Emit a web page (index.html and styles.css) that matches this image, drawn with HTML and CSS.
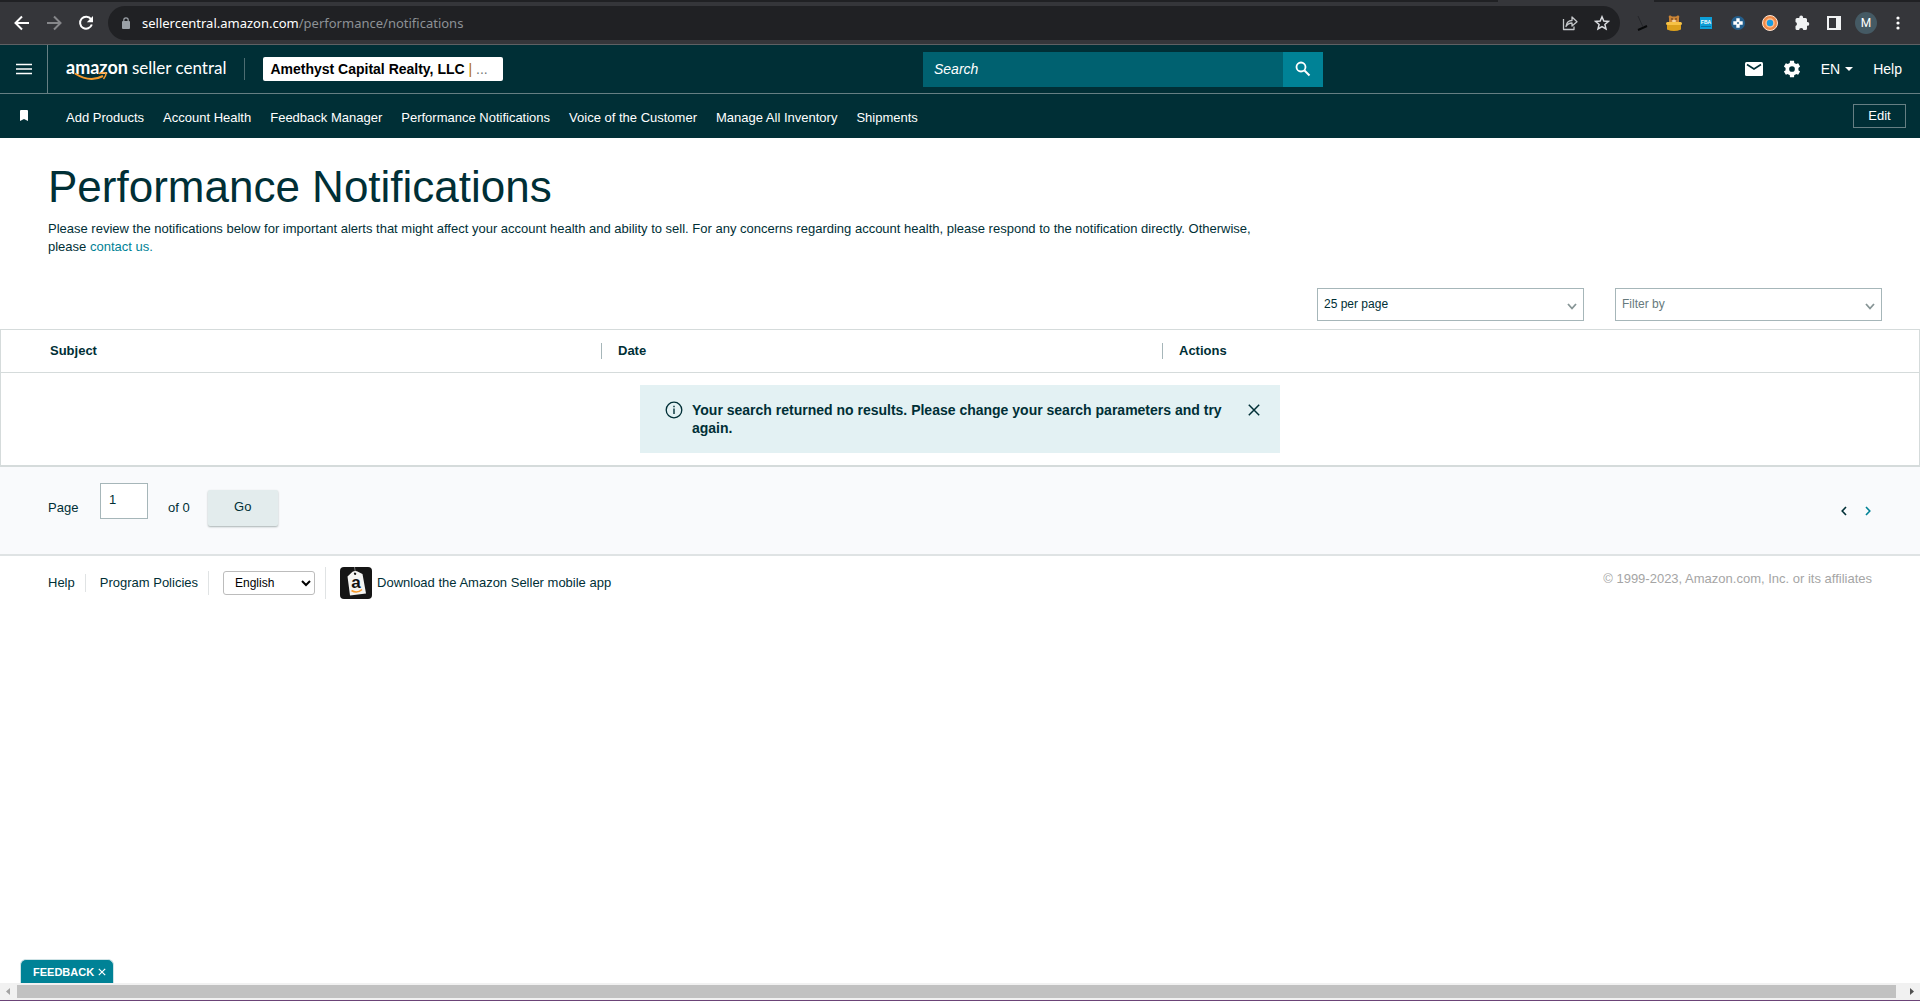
FILE: index.html
```html
<!DOCTYPE html>
<html lang="en">
<head>
<meta charset="utf-8">
<title>Performance Notifications</title>
<link rel="stylesheet" href="styles.css">
</head>
<body>
<div class="browser">
  <div class="tabstrip"><span class="strip-left"></span><span class="strip-right"></span></div>
  <div class="toolbar">
    <button class="tool" aria-label="Back"><svg width="16" height="16" viewBox="0 0 16 16"><path d="M15 8H2M8 1.500L1.500 8L8 14.500" fill="none" stroke="#fff" stroke-width="2"/></svg></button>
    <button class="tool" aria-label="Forward"><svg width="16" height="16" viewBox="0 0 16 16"><path d="M1 8H14M8 1.500L14.500 8L8 14.500" fill="none" stroke="#86878a" stroke-width="2"/></svg></button>
    <button class="tool" aria-label="Reload"><svg width="16" height="16" viewBox="0 0 16 16"><path d="M13 4.200A6 6 0 1 0 13.800 9.500" fill="none" stroke="#fff" stroke-width="2"/><path d="M15 1V7.200H8.800Z" fill="#fff"/></svg></button>
    <div class="omnibox">
      <svg width="8" height="12" viewBox="0 0 8 12"><rect y="4" width="8" height="8" rx="1" fill="#9aa0a6"/><path d="M1.800 4.500V3a2.200 2.200 0 0 1 4.400 0v1.500" fill="none" stroke="#9aa0a6" stroke-width="1.200"/></svg>
      <span class="url">sellercentral.amazon.com<span class="path">/performance/notifications</span></span>
      <button class="tool" aria-label="Share"><svg width="16" height="16" viewBox="0 0 16 16"><path d="M1.500 4V14.500H12V11.500M4 11.500C4.500 7.500 7 5.500 10 5.500V2L15 6.700L10 11V8C7.500 8 5.500 9 4 11.500Z" fill="none" stroke="#c4c7ca" stroke-width="1.300" stroke-linejoin="round"/></svg></button>
      <button class="tool" aria-label="Bookmark"><svg width="16" height="16" viewBox="0 0 16 16"><path d="M8 1.800L9.800 6L14.400 6.400L10.900 9.400L12 13.900L8 11.500L4 13.900L5.100 9.400L1.600 6.400L6.200 6Z" fill="none" stroke="#dadce0" stroke-width="1.500"/></svg></button>
    </div>
    <button class="tool" aria-label="Extension"><svg width="16" height="16" viewBox="0 0 16 16"><path d="M4 15L13 11" stroke="#08090a" stroke-width="2"/><path d="M4 1L9 12" stroke="#25262a" stroke-width="1"/></svg></button>
    <button class="tool" aria-label="Bear extension"><svg width="16" height="16" viewBox="0 0 16 16"><path d="M3 9V3Q2 0 4.500 .5L6 1.500H10L11.500 .5Q14 0 13 3V9Z" fill="#c98436"/><circle cx="6" cy="4" r=".8" fill="#452718"/><circle cx="10" cy="4" r=".8" fill="#452718"/><ellipse cx="8" cy="6" rx="2" ry="1.300" fill="#f4d3a0"/><rect y="7" width="16" height="3" rx="1.500" fill="#f7c245"/><path d="M1 10H15V14.500Q8 17.500 1 14.500Z" fill="#dda11c"/></svg></button>
    <button class="tool" aria-label="FBA extension"><svg width="12" height="12" viewBox="0 0 12 12"><rect width="12" height="12" fill="#0d9fd8"/><text x="6" y="7" text-anchor="middle" class="fba">FBA</text><path d="M1 9.500H11" stroke="#0873a8"/></svg></button>
    <button class="tool" aria-label="Search extension"><svg width="14" height="14" viewBox="0 0 14 14"><circle cx="7" cy="7" r="7" fill="#245f8c"/><path d="M5.300 2.300h3.400v3h3v3.400h-3v3H5.300v-3h-3V5.300h3Z" fill="#fff"/><path d="M7 5.700L8.300 7L7 8.300L5.700 7Z" fill="#245f8c"/></svg></button>
    <button class="tool" aria-label="Ring extension"><svg width="16" height="16" viewBox="0 0 16 16"><circle cx="8" cy="8" r="7.500" fill="#f18a46" stroke="#fde4d2"/><circle cx="8" cy="8" r="4.700" fill="#fbbd91"/><circle cx="8" cy="8" r="3.200" fill="#179de3"/></svg></button>
    <button class="tool" aria-label="Extensions"><svg width="16" height="16" viewBox="0 0 16 16"><path d="M1.500 4.500Q1.500 3 3 3H5.300V2.500a1.900 1.900 0 0 1 3.800 0V3h2.400Q13 3 13 4.500V7h.4a1.900 1.900 0 0 1 0 3.800H13v2.700Q13 15 11.500 15H9.300a2.100 2.100 0 0 0-4.200 0H3Q1.500 15 1.500 13.500V11a2.100 2.100 0 0 0 0-4Z" fill="#f1f3f4"/></svg></button>
    <button class="tool" aria-label="Side panel"><svg width="14" height="14" viewBox="0 0 14 14"><rect width="14" height="14" fill="#f1f3f4"/><rect x="2" y="2" width="7" height="10" fill="#35363a"/></svg></button>
    <button class="tool" aria-label="Profile"><span class="avatar">M</span></button>
    <button class="tool" aria-label="Menu"><svg width="4" height="14" viewBox="0 0 4 14" fill="#fff"><circle cx="2" cy="2" r="1.600"/><circle cx="2" cy="7" r="1.600"/><circle cx="2" cy="12" r="1.600"/></svg></button>
  </div>
</div>

<header class="header">
  <div class="brandbar">
    <button class="burger" aria-label="Menu"><svg width="16" height="12" viewBox="0 0 16 12"><path d="M0 1.500H16M0 6H16M0 10.500H16" stroke="#fff" stroke-width="1.500"/></svg></button>
    <a class="logo" href="#"><span class="words"><b>amazon</b><span>seller central</span></span>
      <svg class="smile" width="34" height="10" viewBox="0 0 34 10"><path d="M1 1.500Q16 11 29 4" fill="none" stroke="#f79a2c" stroke-width="2"/><path d="M25 1.500Q32 0 32 1.500Q32 4 29.500 7" fill="none" stroke="#f79a2c" stroke-width="1.500"/></svg>
    </a>
    <button class="account"><b>Amethyst Capital Realty, LLC</b> <i>|</i> <span>...</span></button>
  </div>
  <form class="search">
    <input type="text" placeholder="Search" aria-label="Search">
    <button type="button" aria-label="Search"><svg width="16" height="16" viewBox="0 0 16 16"><circle cx="6" cy="6" r="4.500" fill="none" stroke="#fff" stroke-width="1.800"/><path d="M9.500 9.500L14.500 14.500" stroke="#fff" stroke-width="2"/></svg></button>
  </form>
  <div class="utils">
    <a href="#" aria-label="Messages"><svg width="18" height="14" viewBox="0 0 18 14"><rect width="18" height="14" rx="1.500" fill="#fff"/><path d="M2 2.500L9 7L16 2.500" fill="none" stroke="#002f36" stroke-width="1.600"/></svg></a>
    <a href="#" aria-label="Settings"><svg width="18" height="18" viewBox="0 0 24 24"><path fill="#fff" d="M20.500 13.500a8 8 0 0 0 0-3l2.300-1.700-2.600-4.600-2.700 1.200a8 8 0 0 0-2.500-1.500L14.700 1H9.300L9 3.900a8 8 0 0 0-2.500 1.500L3.800 4.200 1.200 8.800l2.300 1.700a8 8 0 0 0 0 3l-2.300 1.700 2.600 4.600 2.700-1.200A8 8 0 0 0 9 20.100l.3 2.900h5.400l.3-2.900a8 8 0 0 0 2.500-1.500l2.700 1.200 2.600-4.600ZM12 15.800a3.800 3.800 0 1 1 0-7.600 3.800 3.800 0 0 1 0 7.600Z"/></svg></a>
    <button class="lang">EN <svg width="8" height="4" viewBox="0 0 8 4"><path d="M0 0H8L4 4Z" fill="#fff"/></svg></button>
    <a href="#">Help</a>
  </div>
</header>

<nav class="nav">
  <span class="mark"><svg width="8" height="12" viewBox="0 0 8 12"><path d="M0 1Q0 0 1 0H7Q8 0 8 1V11L4 9L0 11Z" fill="#fff"/></svg></span>
  <a href="#">Add Products</a><a href="#">Account Health</a><a href="#">Feedback Manager</a><a href="#">Performance Notifications</a><a href="#">Voice of the Customer</a><a href="#">Manage All Inventory</a><a href="#">Shipments</a>
  <button class="edit">Edit</button>
</nav>

<main class="main">
  <section class="intro">
    <h1>Performance Notifications</h1>
    <p>Please review the notifications below for important alerts that might affect your account health and ability to sell. For any concerns regarding account health, please respond to the notification directly. Otherwise, please <a href="#">contact us.</a></p>
  </section>
  <div class="filters">
    <div class="picker"><select aria-label="Results per page"><option>25 per page</option></select><svg width="10" height="7" viewBox="0 0 10 7"><path d="M1 1L5 5.500L9 1" fill="none" stroke="#879596" stroke-width="1.800"/></svg></div>
    <div class="picker muted"><select aria-label="Filter by"><option>Filter by</option></select><svg width="10" height="7" viewBox="0 0 10 7"><path d="M1 1L5 5.500L9 1" fill="none" stroke="#879596" stroke-width="1.800"/></svg></div>
  </div>
  <table class="results">
    <colgroup><col class="col-subject"><col class="col-date"><col></colgroup>
    <thead><tr><th><span>Subject</span></th><th><span>Date</span></th><th><span>Actions</span></th></tr></thead>
    <tbody><tr><td colspan="3">
      <div class="alert">
        <svg width="18" height="18" viewBox="0 0 18 18"><circle cx="9" cy="9" r="7.800" fill="none" stroke="#002f36" stroke-width="1.300"/><path d="M9 7.500V13M9 4.800V6.200" stroke="#002f36" stroke-width="1.400"/></svg>
        <p>Your search returned no results. Please change your search parameters and try again.</p>
        <button aria-label="Close"><svg width="12" height="12" viewBox="0 0 12 12"><path d="M.8 .8L11.200 11.200M11.200 .8L.8 11.200" stroke="#002f36" stroke-width="1.500"/></svg></button>
      </div>
    </td></tr></tbody>
  </table>
  <div class="pager">
    <label for="page">Page</label>
    <input id="page" type="text" value="1">
    <span class="total">of 0</span>
    <button class="go">Go</button>
    <div class="arrows">
      <button aria-label="Previous page"><svg width="6" height="10" viewBox="0 0 6 10"><path d="M5 1L1.200 5L5 9" fill="none" stroke="#002f36" stroke-width="1.600"/></svg></button>
      <button aria-label="Next page"><svg width="6" height="10" viewBox="0 0 6 10"><path d="M1 1L4.800 5L1 9" fill="none" stroke="#008296" stroke-width="1.600"/></svg></button>
    </div>
  </div>
  <footer class="footer">
    <ul>
      <li><a href="#">Help</a></li>
      <li><a href="#">Program Policies</a></li>
      <li><select aria-label="Language"><option>English</option></select></li>
      <li><a class="app" href="#"><svg width="32" height="32" viewBox="0 0 32 32"><rect width="32" height="32" rx="4" fill="#151515"/><path d="M14.500 0L15.500 6" stroke="#777"/><path fill-rule="evenodd" d="M7.500 9.500L12.500 4.800Q14.500 3.500 17 4.200L22.500 7L26 26.500L10 28.500ZM15 5.500a1.200 1.200 0 1 0 .1 2.400a1.200 1.200 0 0 0-.1-2.400Z" fill="#f4f4f2"/><text x="16" y="21" text-anchor="middle" class="tag">a</text><path d="M11.500 23.500Q17 27 22 22.500" fill="none" stroke="#f79a2c" stroke-width="1.600"/></svg><span>Download the Amazon Seller mobile app</span></a></li>
    </ul>
    <small>© 1999-2023, Amazon.com, Inc. or its affiliates</small>
  </footer>
</main>

<button class="feedback">FEEDBACK <svg width="8" height="8" viewBox="0 0 8 8"><path d="M.8 .8L7.200 7.200M7.200 .8L.8 7.200" stroke="#fff" stroke-width="1.200"/></svg></button>
<div class="scrollbar">
  <svg width="17" height="17" viewBox="0 0 17 17"><path d="M10 5V12L6 8.500Z" fill="#a3a3a3"/></svg>
  <span class="thumb"></span>
  <svg width="24" height="17" viewBox="0 0 24 17"><path d="M14 5V12L18 8.500Z" fill="#505050"/></svg>
</div>
</body>
</html>
```
FILE: styles.css
```css
* { box-sizing: border-box; }
body {
  margin: 0;
  min-height: 100vh;
  display: flex;
  flex-direction: column;
  background: #fff;
  color: #002f36;
  font: 13px/18px "Liberation Sans", Arial, sans-serif;
}
button, input, select { font: inherit; color: inherit; margin: 0; }
button { background: none; border: 0; padding: 0; }
a { color: inherit; text-decoration: none; }
svg { display: block; flex: none; }

.browser { background: #35363a; border-bottom: 1px solid #5f6063; }
.tabstrip { display: flex; height: 2px; }
.strip-left { flex: 1; margin-right: 156px; background: #202124; }
.strip-right { width: 266px; background: #202124; }
.toolbar { display: flex; align-items: center; padding: 4px 6px; }
.tool { width: 32px; height: 32px; display: flex; align-items: center; justify-content: center; flex: none; }
.omnibox {
  flex: 1;
  height: 34px;
  margin: 0 6px;
  padding: 0 2px 0 14px;
  border-radius: 17px;
  background: #202124;
  display: flex;
  align-items: center;
}
.url { flex: 1; margin-left: 12px; color: #fff; font: 13px/20px "Noto Sans", sans-serif; }
.path { color: #8d9196; }
.avatar { width: 22px; height: 22px; border-radius: 50%; background: #455a64; color: #fff; font: 12px/22px Roboto, sans-serif; text-align: center; }
.fba { font: bold 5px "Liberation Sans", sans-serif; fill: #fff; }

.header {
  display: grid;
  grid-template-columns: 923fr 400px 597fr;
  align-items: center;
  height: 49px;
  background: #002f36;
  border-bottom: 1px solid #667f83;
  color: #fff;
}
.brandbar { display: flex; align-items: center; height: 48px; }
.burger { width: 48px; height: 48px; border-right: 1px solid #667f83; display: flex; align-items: center; justify-content: center; }
.logo { position: relative; margin-left: 18px; padding-right: 18px; border-right: 1px solid #4d6d72; }
.words { display: flex; align-items: baseline; gap: 4px; padding-bottom: 3px; font: 18px/18px Lato, sans-serif; }
.words span { font-size: 17px; }
.smile { position: absolute; left: 8px; top: 14px; }
.account {
  width: 240px;
  height: 24px;
  margin-left: 18px;
  padding: 0 7px;
  border-radius: 2px;
  background: #fff;
  color: #000;
  font-size: 14px;
  text-align: left;
}
.account i { color: #b06a00; font-style: normal; }
.account span { color: #777; }
.search { display: flex; height: 35px; }
.search input {
  flex: 1;
  min-width: 0;
  border: 0;
  padding: 0 11px;
  background: #006170;
  color: #fff;
  font-size: 14px;
  font-style: italic;
}
.search input::placeholder { color: #fff; opacity: 1; }
.search button { width: 40px; background: #008296; display: flex; align-items: center; justify-content: center; }
.utils { display: flex; justify-content: flex-end; align-items: center; gap: 20px; padding-right: 18px; font-size: 14px; }
.lang { display: flex; align-items: center; gap: 5px; }

.nav { display: flex; align-items: center; gap: 19px; height: 44px; padding-right: 14px; background: #002f36; color: #fff; }
.nav a { padding-top: 3px; }
.mark { width: 47px; display: flex; justify-content: center; }
.edit { width: 53px; height: 24px; margin-left: auto; border: 1px solid #667f83; line-height: 20px; }

.main { flex: 1; }
.intro { padding: 24px 48px 0; }
h1 { margin: 0 0 8px; font-size: 44px; line-height: 50px; font-weight: 400; }
.intro p { margin: 0; max-width: 1220px; }
.intro a { color: #008296; }
.filters { display: flex; justify-content: flex-end; gap: 31px; padding: 32px 38px 8px; }
.picker { position: relative; width: 267px; }
.picker select {
  appearance: none;
  width: 100%;
  height: 33px;
  padding: 0 6px 2px;
  border: 1px solid #a6b6b9;
  border-radius: 0;
  background: #fff;
  font-size: 12px;
}
.picker svg { position: absolute; right: 7px; top: 15px; }
.muted select { color: #667a7d; }

.results { width: 100%; border-collapse: separate; border-spacing: 0; table-layout: fixed; border: 1px solid #d5dbdb; border-bottom-width: 2px; }
.col-subject { width: 600px; }
.col-date { width: 561px; }
.results th { padding: 13px 0; text-align: left; border-bottom: 1px solid #d5dbdb; line-height: 16px; }
.results th span { display: block; padding-left: 16px; border-left: 1px solid #a6b6b9; }
.results th:first-child span { padding-left: 49px; border-left: 0; }
.results td { padding: 12px 0; }
.alert { display: flex; align-items: flex-start; width: 640px; min-height: 68px; margin: 0 auto; padding: 16px 20px 16px 25px; background: #e3f1f3; font-size: 14px; font-weight: 700; }
.alert p { flex: 1; margin: 0 9px; }
.alert button { padding: 3px 0; }

.pager { display: flex; align-items: center; height: 89px; padding: 0 48px; background: #f9fafc; border-bottom: 2px solid #dfe3e4; }
.pager label { width: 52px; padding-bottom: 6px; }
.pager input { width: 48px; height: 36px; margin-bottom: 20px; padding: 0 8px 2px; border: 1px solid #a6b6b9; background: #fff; }
.total { margin-left: 20px; padding-bottom: 6px; }
.go { width: 70px; height: 36px; margin: 0 0 6px 18px; padding-bottom: 2px; border-radius: 2px; background: #e3eced; box-shadow: 0 1px 2px #a9b2b3; }
.arrows { display: flex; gap: 18px; margin-left: auto; padding-right: 1px; }

.footer { display: flex; justify-content: space-between; align-items: flex-start; padding: 11px 48px; }
.footer ul { display: flex; align-items: center; margin: 0; padding: 0; list-style: none; }
.footer li + li { margin-left: 10px; padding-left: 14px; border-left: 1px solid #e0e3e4; }
.footer select { display: block; width: 92px; height: 24px; padding: 0 7px; border: 1px solid #bcbcbc; border-radius: 3px; background: #fff; color: #000; font-size: 12px; }
.app { display: flex; align-items: center; gap: 5px; }
.tag { font: bold 17px "Liberation Sans", sans-serif; fill: #111; }
.footer small { padding-top: 3px; color: #a5a5a5; font-size: 13px; }

.feedback {
  align-self: flex-start;
  display: flex;
  align-items: center;
  gap: 4px;
  height: 24px;
  margin-left: 20px;
  padding: 0 7px 0 12px;
  border: 1px solid #cfe3e6;
  border-bottom: 0;
  border-radius: 6px 6px 0 0;
  background: #008296;
  color: #fff;
  font-size: 11px;
  font-weight: 700;
}
.scrollbar { display: flex; align-items: center; height: 18px; background: #f1f1f1; border-bottom: 1px solid #6b4377; }
.thumb { flex: 1; height: 13px; background: #c1c1c1; }
```
